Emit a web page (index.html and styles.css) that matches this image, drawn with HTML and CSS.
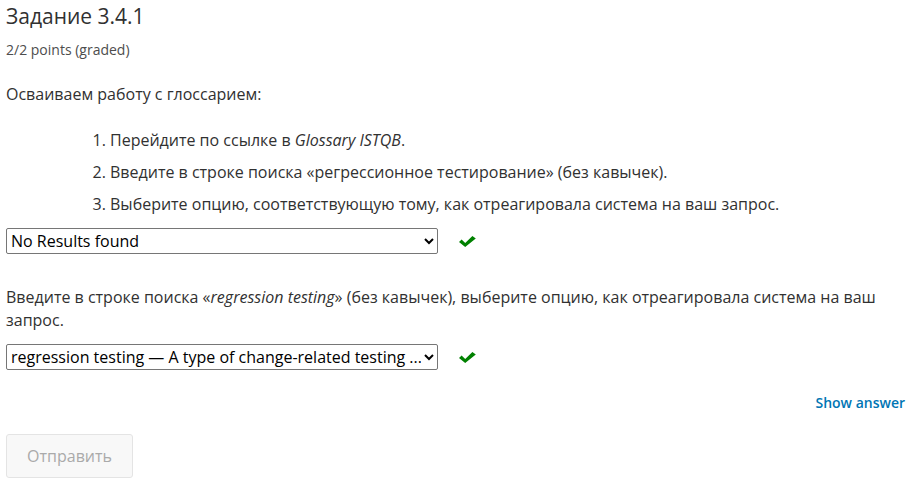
FILE: index.html
```html
<!DOCTYPE html>
<html lang="ru">
<head>
<meta charset="utf-8">
<link rel="stylesheet" href="styles.css">
</head>
<body>
<div class="problem">
  <h3 class="title">Задание 3.4.1</h3>
  <div class="points">2/2 points (graded)</div>
  <p class="intro">Осваиваем работу с глоссарием:</p>
  <ol class="steps">
    <li>Перейдите по ссылке в <em>Glossary ISTQB</em>.</li>
    <li>Введите в строке поиска «регрессионное тестирование» (без кавычек).</li>
    <li>Выберите опцию, соответствующую тому, как отреагировала система на ваш запрос.</li>
  </ol>
  <div class="answer first">
    <select class="choice"><option>No Results found</option></select>
    <svg class="check" viewBox="0 0 17 11" width="17" height="11"><polygon points="0,6 2.6,3.4 6.2,7 13.4,0 16.8,2.6 6.2,11" fill="#008100"/></svg>
  </div>
  <p class="question">Введите в строке поиска «<em>regression testing</em>» (без кавычек), выберите опцию, как отреагировала система на ваш запрос.</p>
  <div class="answer">
    <select class="choice"><option>regression testing — A type of change-related testing ...</option></select>
    <svg class="check" viewBox="0 0 17 11" width="17" height="11"><polygon points="0,6 2.6,3.4 6.2,7 13.4,0 16.8,2.6 6.2,11" fill="#008100"/></svg>
  </div>
  <div class="actions-top"><a class="show-answer" href="#">Show answer</a></div>
  <div class="actions"><button class="submit" disabled>Отправить</button></div>
</div>
</body>
</html>
```
FILE: styles.css
```css
html, body {
  margin: 0;
  padding: 0;
  background: #fff;
}
body {
  font-family: "Open Sans", "Noto Sans", sans-serif;
  color: #313131;
}
.problem {
  padding: 0 11px 0 6px;
}
.title {
  margin: 0;
  padding-top: 2px;
  font-size: 21px;
  font-weight: 400;
  line-height: 28px;
  color: #313131;
}
.points {
  margin-top: 11px;
  font-size: 14px;
  line-height: 18px;
  color: #4d4d4d;
}
.intro {
  margin: 24px 0 0;
  font-size: 16px;
  line-height: 22px;
}
.steps {
  margin: 24px 0 0;
  padding-left: 104px;
  font-size: 16px;
  line-height: 22px;
}
.steps li {
  margin-bottom: 10px;
}
.answer {
  display: flex;
  align-items: center;
  gap: 20px;
  margin-top: 0;
}
.answer.first {
  margin-top: 13px;
}
.choice {
  width: 432px;
  height: 26px;
  font-family: "Open Sans", sans-serif;
  font-size: 16px;
  color: #000;
  border: 1px solid #767676;
  border-radius: 2px;
  background: #fff;
  padding: 0;
}
.check {
  display: block;
  margin-left: 1px;
}
.question {
  margin: 32px 0 12px;
  font-size: 16px;
  line-height: 23px;
}
.actions-top {
  display: flex;
  justify-content: flex-end;
  margin-top: 23px;
}
.show-answer {
  font-size: 14px;
  font-weight: 600;
  color: #0075b4;
  text-decoration: none;
}
.actions {
  margin-top: 22px;
}
.submit {
  font-family: "Open Sans", sans-serif;
  font-size: 16px;
  color: #aaa;
  background: #f8f8f8;
  border: 1px solid #e4e4e4;
  border-radius: 3px;
  padding: 0;
  height: 44px;
  width: 127px;
}
```
